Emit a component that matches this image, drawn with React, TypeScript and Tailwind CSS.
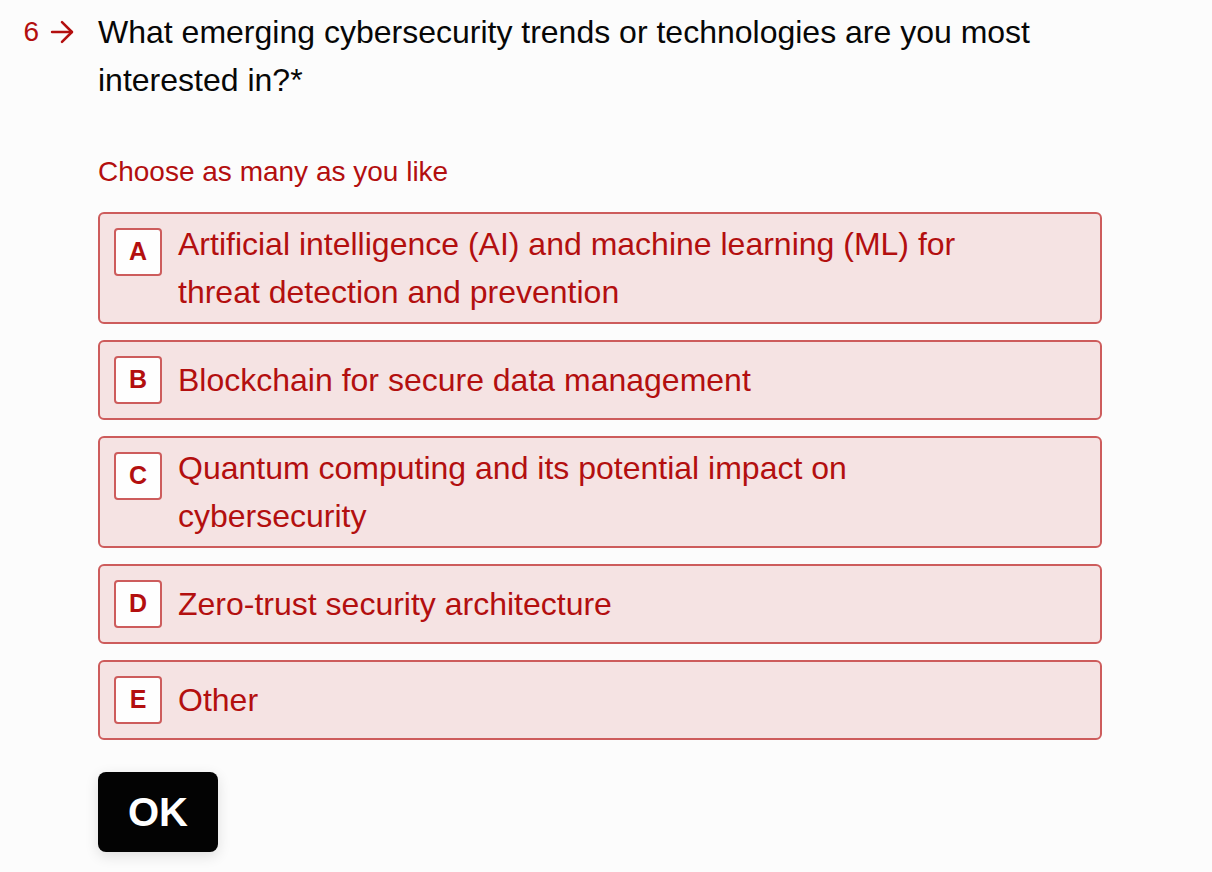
import { ArrowRight } from 'lucide-react'

const OPTIONS = [
  { key: 'A', label: 'Artificial intelligence (AI) and machine learning (ML) for threat detection and prevention' },
  { key: 'B', label: 'Blockchain for secure data management' },
  { key: 'C', label: 'Quantum computing and its potential impact on cybersecurity' },
  { key: 'D', label: 'Zero-trust security architecture' },
  { key: 'E', label: 'Other' },
]

export default function App() {
  return (
    <div className="min-h-screen bg-[#fcfcfc] font-['Liberation_Sans',Arial,sans-serif]">
      <div className="flex pt-2">
        <div className="w-[98px] flex items-start justify-end pr-[19px] pt-[2px] text-[#b30f0f]">
          <span className="text-[28px] leading-[44px]">6</span>
          <ArrowRight className="ml-[6px] mt-[5px] w-[34px] h-[34px]" strokeWidth={1.8} />
        </div>
        <div className="flex-1 pr-[110px]">
          <h1 className="text-[32px] leading-[48px] text-[#070707] max-w-[960px]">
            What emerging cybersecurity trends or technologies are you most interested in?*
          </h1>

          <p className="mt-[50px] text-[28px] leading-[36px] text-[#b30f0f]">Choose as many as you like</p>

          <div className="mt-[22px] flex flex-col gap-[16px] w-[1004px]">
            {OPTIONS.map((o) => (
              <div
                key={o.key}
                className="flex items-start rounded-[6px] border-2 border-[#cd5c5c] bg-[#f5e3e3] pl-[14px] pr-[120px] py-[6px]"
              >
                <div className="mt-[8px] w-[48px] h-[48px] shrink-0 flex items-center justify-center rounded-[4px] border-2 border-[#cd5c5c] bg-[#fefefe] text-[25px] font-bold text-[#b30f0f]">
                  {o.key}
                </div>
                <div className="ml-[16px] min-h-[64px] flex items-center">
                  <span className="text-[32px] leading-[48px] text-[#b30f0f]">{o.label}</span>
                </div>
              </div>
            ))}
          </div>

          <button className="mt-[32px] w-[120px] h-[80px] rounded-[8px] bg-[#030303] text-white text-[40px] font-bold shadow-[0_4px_14px_rgba(0,0,0,0.12)]">
            OK
          </button>
        </div>
      </div>
    </div>
  )
}
